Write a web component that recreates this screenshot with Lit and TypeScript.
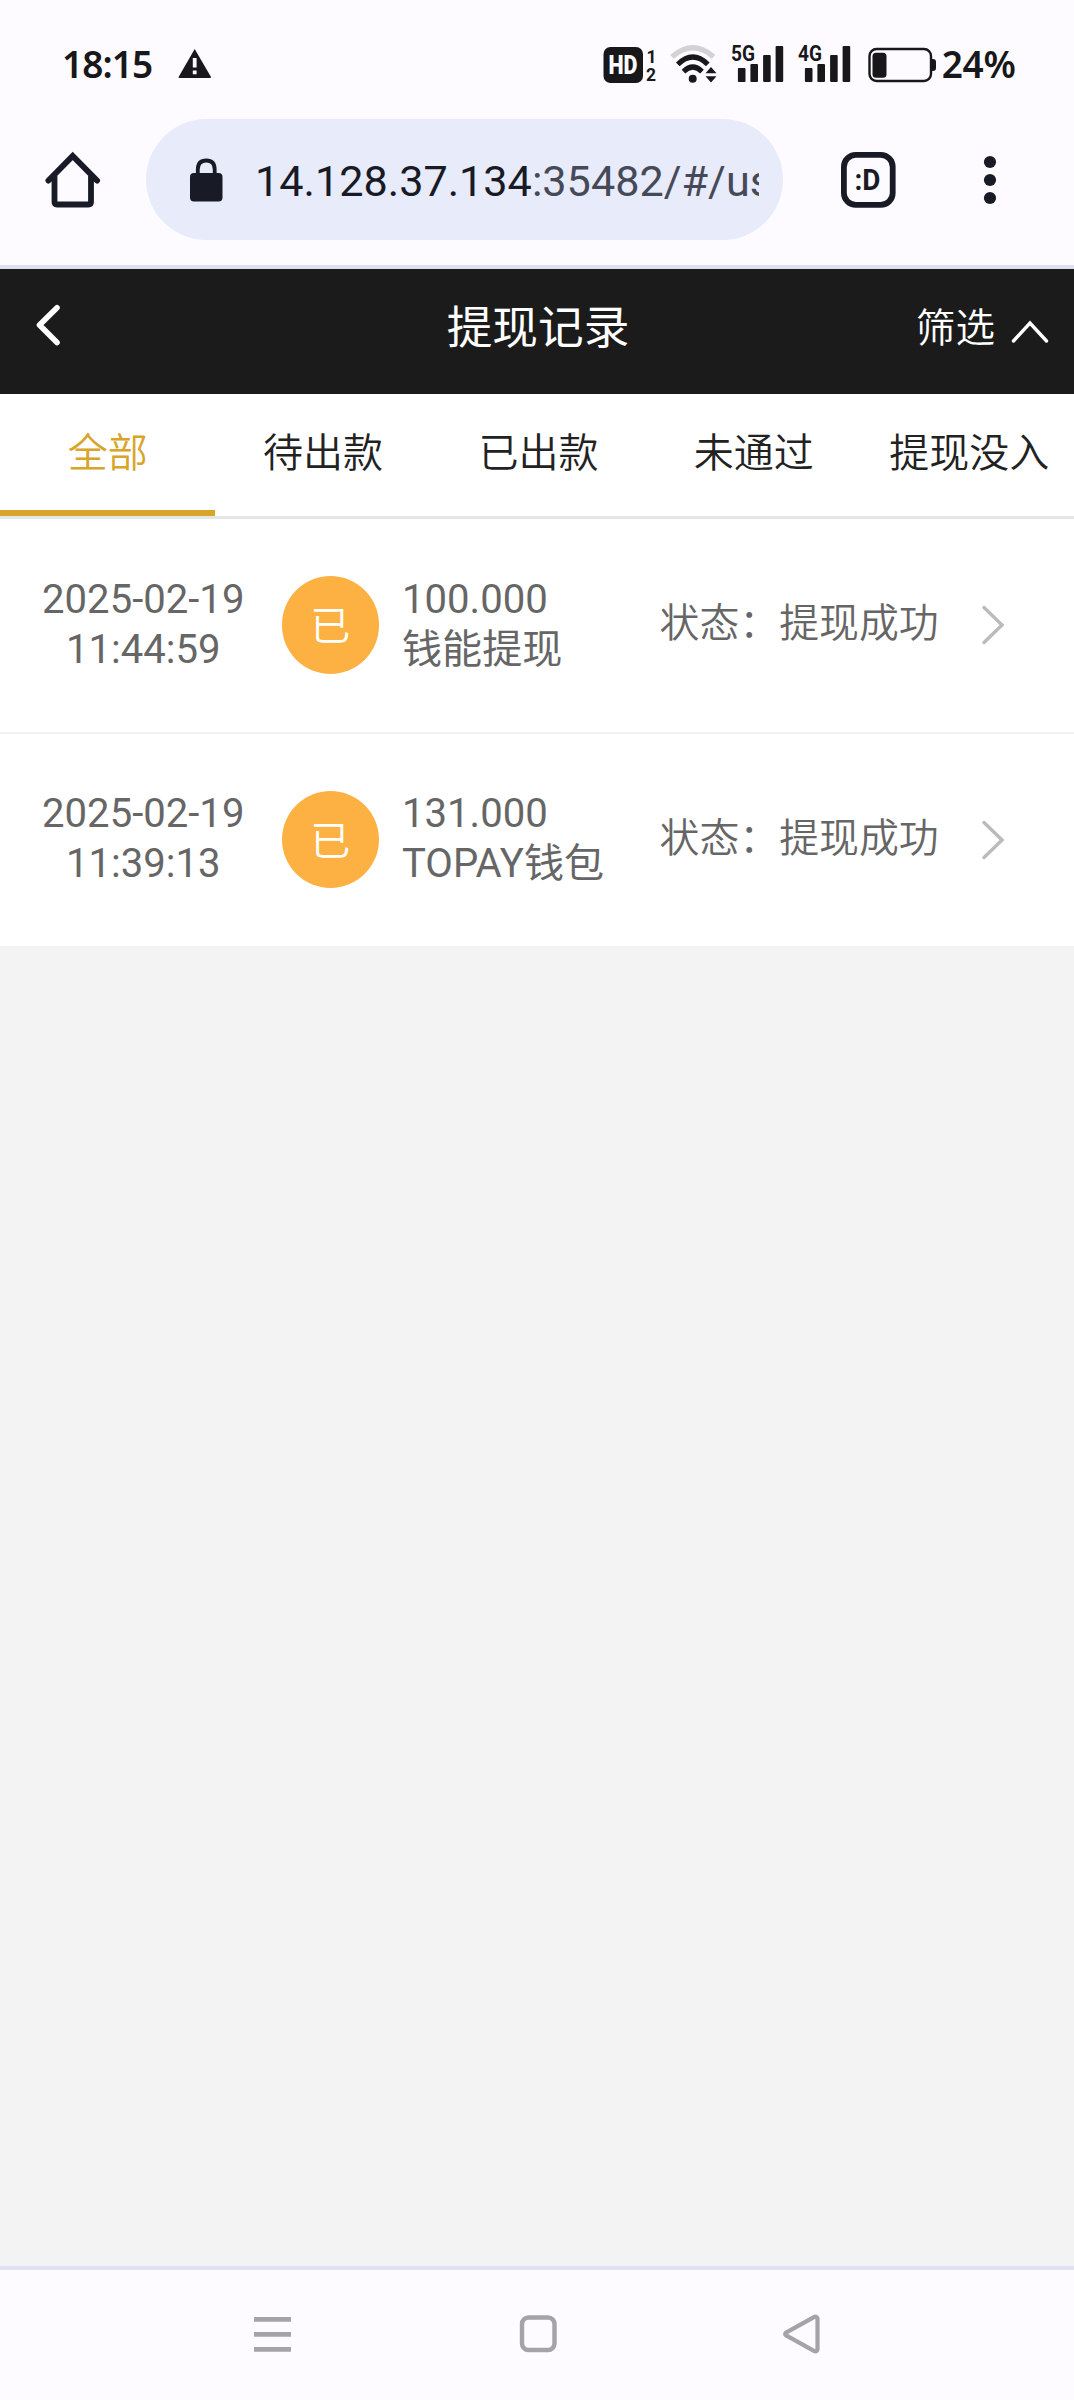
import { LitElement, html, css, svg } from "lit";
import { customElement, property } from "lit/decorators.js";
import { classMap } from "lit/directives/class-map.js";

interface WithdrawRecord {
  date: string;
  time: string;
  amount: string;
  channel: string;
  status: string;
}

const RECORDS: WithdrawRecord[] = [
  { date: "2025-02-19", time: "11:44:59", amount: "100.000", channel: "钱能提现", status: "提现成功" },
  { date: "2025-02-19", time: "11:39:13", amount: "131.000", channel: "TOPAY钱包", status: "提现成功" },
];

const TABS = ["全部", "待出款", "已出款", "未通过", "提现没入"];

const signal = (label: string) => html`
  <svg class="signal" width="54" height="46" viewBox="0 -6 54 46">
    <text x="0" y="17.3" textLength="24" lengthAdjust="spacingAndGlyphs" class="net">${label}</text>
    ${[
      [6.9, 24],
      [19.4, 20],
      [32.1, 11],
      [44.6, 2],
    ].map(([x, y]) => svg`<rect x=${x} y=${y} width="7.6" height=${38 - y} rx="1" fill="#18181a"/>`)}
  </svg>
`;

@customElement("phone-status")
export class PhoneStatus extends LitElement {
  static styles = css`
    :host {
      display: flex;
      align-items: flex-start;
      height: 119px;
      padding: 44px 58.5px 0 62px;
      box-sizing: border-box;
      color: #18181a;
      font-family: "Noto Sans", sans-serif;
    }
    .clock,
    .percent {
      font-size: 37px;
      font-weight: 600;
      line-height: 40px;
      white-space: nowrap;
    }
    .clock {
      letter-spacing: -0.9px;
      width: 116px;
    }
    .percent {
      margin-left: 5px;
      letter-spacing: -0.3px;
    }
    .spacer {
      flex: 1;
    }
    svg {
      display: block;
      flex: none;
      overflow: visible;
    }
    .net {
      font: 700 22.5px "Roboto", sans-serif;
      fill: #18181a;
    }
    .hd {
      font: 900 25px "Roboto", sans-serif;
      fill: #fdfbff;
    }
    .sim {
      font: 700 17.5px "Roboto", sans-serif;
      fill: #18181a;
    }
    .wifi {
      margin-left: 14px;
    }
    .signal {
      margin: -6px 0 0 14px;
    }
    .signal + .signal {
      margin-left: 12.5px;
    }
    .battery {
      margin-left: 16px;
    }
  `;

  render() {
    return html`
      <span class="clock">18:15</span>
      <svg width="34" height="40" viewBox="0 0 34 40">
        <path d="M16.7 5 L33 33 Q33.2 34 32 34 H1.600 Q.2 34 .6 33 Z" fill="#18181a" />
        <path d="M14.800 14h3.800v9.500h-3.800z M14.800 26.500h3.800v3.800h-3.800z" fill="#fdfbff" />
      </svg>
      <span class="spacer"></span>
      <svg width="54" height="40" viewBox="0 0 54 40">
        <rect x="1.500" y="3" width="39.500" height="36" rx="7" fill="#18181a" />
        <text x="6.500" y="29.800" textLength="29" lengthAdjust="spacingAndGlyphs" class="hd">HD</text>
        <text x="44.500" y="18.500" class="sim">1</text>
        <text x="44" y="36.500" class="sim">2</text>
      </svg>
      <svg class="wifi" width="47" height="40" viewBox="0 0 47 40">
        <g fill="none" stroke="#18181a" stroke-width="5.200">
          <path d="M2 12.800 Q22.800 -5.200 43.600 12.800" stroke="#d2d1d4" />
          <path d="M7.800 20.300 Q22.800 5.700 37.800 20.300" />
          <path d="M13.500 27.600 Q22.800 18.600 32 27.600" />
        </g>
        <circle cx="22.700" cy="34.800" r="4" fill="#18181a" />
        <path d="M35.500 29.300 L41 23 L46.500 29.300 Z M35.500 32.300 L41 38.500 L46.500 32.300 Z" fill="#18181a" />
      </svg>
      ${signal("5G")} ${signal("4G")}
      <svg class="battery" width="69" height="40" viewBox="0 0 69 40">
        <rect x="1.500" y="5" width="61.500" height="32" rx="7" fill="none" stroke="#18181a" stroke-width="2.400" />
        <rect x="4.500" y="8.800" width="14" height="25" rx="3.500" fill="#18181a" />
        <path d="M63.500 15h1.500q3 0 3 3v6q0 3-3 3h-1.500z" fill="#18181a" />
      </svg>
      <span class="percent">24%</span>
    `;
  }
}

@customElement("browser-bar")
export class BrowserBar extends LitElement {
  static styles = css`
    :host {
      display: flex;
      align-items: flex-start;
      height: 150px;
      padding-left: 45px;
      box-sizing: border-box;
      border-bottom: 4px solid #dde1ee;
      color: #181b25;
    }
    svg {
      display: block;
      flex: none;
    }
    .home {
      margin-top: 32px;
    }
    .address {
      display: flex;
      align-items: center;
      width: 637px;
      height: 121px;
      margin-left: 45px;
      padding: 0 24px 0 43px;
      box-sizing: border-box;
      border-radius: 61px;
      background: #e8ebfa;
    }
    .url {
      flex: 1;
      min-width: 0;
      margin: 5px 0 0 30px;
      overflow: hidden;
      white-space: nowrap;
      font: 400 43.2px/60px "Roboto", sans-serif;
      color: #464a58;
    }
    .host {
      color: #181b25;
    }
    .tabs {
      margin: 33px 0 0 58px;
    }
    .face {
      font: 700 29px "Roboto", sans-serif;
      fill: #181b25;
    }
    .more {
      margin: 36px 0 0 85.5px;
    }
  `;

  render() {
    return html`
      <svg class="home" width="56" height="58" viewBox="0 0 56 58">
        <path d="M3.500 29.500 L27.700 5 L52 29.500" fill="none" stroke="#181b25" stroke-width="6" stroke-linecap="round" />
        <path d="M9.500 25 V51 Q9.500 53.500 12 53.500 H43.500 Q46 53.500 46 51 V25" fill="none" stroke="#181b25" stroke-width="5.800" />
      </svg>
      <div class="address">
        <svg width="36" height="48" viewBox="0 0 36 48">
          <path d="M8.800 20 V13.500 Q8.800 4.500 17.300 4.500 Q25.700 4.500 25.700 13.500 V20" fill="none" stroke="#181b25" stroke-width="3.800" />
          <rect x="1" y="17" width="32.500" height="28.500" rx="4" fill="#181b25" />
        </svg>
        <div class="url"><span class="host">14.128.37.134</span>:35482/#/us</div>
      </div>
      <svg class="tabs" width="55" height="56" viewBox="0 0 55 56">
        <rect x="2.900" y="2.900" width="48.800" height="50" rx="12" fill="none" stroke="#181b25" stroke-width="5.800" />
        <text x="13.500" y="38" textLength="26" lengthAdjust="spacingAndGlyphs" class="face">:D</text>
      </svg>
      <svg class="more" width="16" height="52" viewBox="0 0 16 52">
        <circle cx="8" cy="7" r="6.100" fill="#181b25" />
        <circle cx="8" cy="25" r="6.100" fill="#181b25" />
        <circle cx="8" cy="43" r="6.100" fill="#181b25" />
      </svg>
    `;
  }
}

@customElement("record-row")
export class RecordRow extends LitElement {
  @property({ attribute: false }) record!: WithdrawRecord;

  static styles = css`
    :host {
      display: flex;
      align-items: flex-start;
      height: 212.5px;
      padding-left: 41px;
      box-sizing: border-box;
      background: #fff;
      color: #666;
      font: 400 40.1px/50px "Roboto", "Noto Sans CJK SC", sans-serif;
    }
    .when {
      width: 204.5px;
      margin-top: 55.5px;
      text-align: center;
      white-space: nowrap;
    }
    .badge {
      width: 97.5px;
      height: 97.5px;
      margin: 57px 0 0 36px;
      border-radius: 50%;
      background: #fcb142;
      color: #fff;
      font-weight: 350;
      line-height: 102px;
      text-align: center;
    }
    .what {
      width: 257.5px;
      margin: 55.5px 0 0 23px;
      white-space: nowrap;
    }
    .line {
      height: 50px;
    }
    .status {
      margin-top: 80px;
      font-size: 39.9px;
      font-weight: 350;
      white-space: nowrap;
    }
    .arrow {
      display: block;
      margin: 85px 0 0 41.5px;
    }
  `;

  render() {
    const r = this.record;
    return html`
      <div class="when">
        <div class="line">${r.date}</div>
        <div class="line">${r.time}</div>
      </div>
      <div class="badge">已</div>
      <div class="what">
        <div class="line">${r.amount}</div>
        <div class="line">${r.channel}</div>
      </div>
      <div class="status">状态：${r.status}</div>
      <svg class="arrow" width="26" height="42" viewBox="0 0 26 42">
        <path d="M4 3.500 L22 21 L4 38.500" fill="none" stroke="#bbb" stroke-width="3.400" stroke-linecap="round" />
      </svg>
    `;
  }
}

@customElement("app-root")
export class AppRoot extends LitElement {
  static styles = css`
    :host {
      display: flex;
      flex-direction: column;
      width: 1074px;
      height: 2400px;
      overflow: hidden;
      background: #fdfbff;
      font-family: "Roboto", "Noto Sans CJK SC", sans-serif;
    }
    .header {
      display: grid;
      grid-template-columns: 1fr auto 1fr;
      height: 125px;
      padding: 0 24px 0 34px;
      background: #1b1b1b;
      color: #fff;
    }
    .back {
      display: block;
      margin-top: 34px;
      margin-left: -1px;
    }
    .title {
      margin: 30px -1px 0 -9px;
      font-size: 45.7px;
      line-height: 60px;
    }
    .filter {
      display: flex;
      justify-content: flex-end;
      margin-top: 30px;
      font-size: 39.6px;
      font-weight: 350;
      line-height: 60px;
    }
    .caret {
      display: block;
      margin: 19px 0 0 15px;
    }
    .tabs {
      display: grid;
      grid-template-columns: repeat(5, 215.4px);
      height: 122px;
      background: #fff;
      color: #222;
      font-size: 40px;
      font-weight: 350;
      text-align: center;
    }
    .tab {
      padding-top: 28px;
      box-sizing: border-box;
      line-height: 64px;
      white-space: nowrap;
    }
    .tab.active {
      color: #d8a52b;
      border-bottom: 6px solid #d8a52b;
    }
    .list {
      display: flex;
      flex-direction: column;
      gap: 2px;
      padding-top: 3px;
      background: linear-gradient(#e5e6e5 3px, #f3f3f3 3px);
      flex: 1;
    }
    .nav {
      display: flex;
      justify-content: space-between;
      height: 134px;
      padding: 40px 251px 0 251px;
      box-sizing: border-box;
      border-top: 4px solid #e1e2f1;
    }
    .nav svg {
      display: block;
    }
  `;

  render() {
    return html`
      <phone-status></phone-status>
      <browser-bar></browser-bar>
      <div class="header">
        <svg class="back" width="30" height="44" viewBox="0 0 30 44">
          <path d="M24 4.800 L6.500 22 L24 39.500" fill="none" stroke="#fff" stroke-width="5.600" stroke-linecap="round" stroke-linejoin="round" />
        </svg>
        <div class="title">提现记录</div>
        <div class="filter">
          筛选
          <svg class="caret" width="40" height="30" viewBox="0 0 40 30">
            <path d="M3.500 23 L20 5 L36.500 23" fill="none" stroke="#fff" stroke-width="3.400" stroke-linecap="round" />
          </svg>
        </div>
      </div>
      <div class="tabs">
        ${TABS.map((t, i) => html`<div class=${classMap({ tab: true, active: i === 0 })}>${t}</div>`)}
      </div>
      <div class="list">${RECORDS.map((r) => html`<record-row .record=${r}></record-row>`)}</div>
      <div class="nav">
        <svg width="42" height="44" viewBox="0 0 42 44">
          <path d="M3 9.500h37 M3 24.500h37 M3 39.500h37" stroke="#a5a3a7" stroke-width="4.800" transform="translate(0,-0.200)" />
        </svg>
        <svg width="42" height="44" viewBox="0 0 42 44">
          <rect x="6" y="7.500" width="32.500" height="32.500" rx="6.500" fill="none" stroke="#a5a3a7" stroke-width="4.400" />
        </svg>
        <svg width="42" height="48" viewBox="0 0 42 48">
          <path d="M36.500 8.500 Q35.500 5.500 32.500 7.300 L5.500 22.300 Q2.700 24 5.500 25.700 L32.500 40.700 Q36 42.500 36.500 39.500 Z" fill="none" stroke="#a5a3a7" stroke-width="4.200" stroke-linejoin="round" />
        </svg>
      </div>
    `;
  }
}
